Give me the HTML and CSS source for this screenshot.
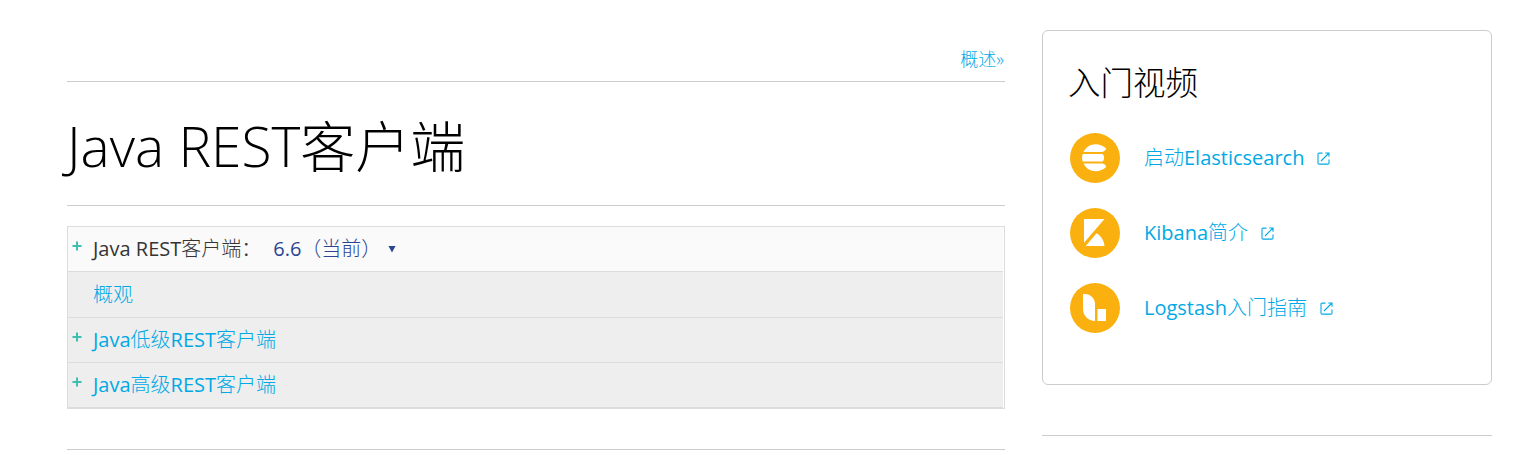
FILE: index.html
```html
<!DOCTYPE html>
<html lang="zh-CN">
<head>
<meta charset="utf-8">
<title>Java REST客户端</title>
<link rel="stylesheet" href="styles.css">
</head>
<body>
<div class="page">
  <main class="main">
    <nav class="nav"><a href="#">概述»</a></nav>
    <h1 class="title"><span class="title-text">Java REST客户端</span></h1>
    <div class="toc">
      <div class="row row-head">
        <svg class="plus" viewBox="0 0 10 10"><path d="M5 .5v9M.5 5h9"/></svg>
        <span class="label">Java REST<span class="zh">客户端：</span></span>
        <span class="select"><span class="version">6.6<span class="zh">（当前）</span></span><svg class="caret" viewBox="0 0 8 8"><path d="M.5 1h7L4 7.500z"/></svg></span>
      </div>
      <div class="row"><span class="plus"></span><a class="label" href="#"><span class="zh">概观</span></a></div>
      <div class="row"><svg class="plus" viewBox="0 0 10 10"><path d="M5 .5v9M.5 5h9"/></svg><a class="label" href="#">Java<span class="zh">低级</span>REST<span class="zh">客户端</span></a></div>
      <div class="row"><svg class="plus" viewBox="0 0 10 10"><path d="M5 .5v9M.5 5h9"/></svg><a class="label" href="#">Java<span class="zh">高级</span>REST<span class="zh">客户端</span></a></div>
    </div>
    <hr class="rule">
  </main>
  <aside class="side">
    <section class="card">
      <h2 class="card-title">入门视频</h2>
      <a class="video" href="#">
        <svg class="badge" viewBox="0 0 50 50"><circle cx="25" cy="25" r="25" fill="#fab110"/><path fill="#fff" d="M13.500 19C16 14 20.500 11.300 25.500 11.300c4.300 0 8 1.700 10.800 4.500-1.200 2-2.700 3.200-4.500 3.200zM12.600 21H32c2.800 0 2.800 7.500 0 7.500H12.600a13 13 0 0 1 0-7.500zM13.500 30.500H32c1.800 0 3.300 1.200 4.300 3.200-2.800 2.800-6.500 4.500-10.800 4.500-5 0-9.500-2.700-12-7.700z"/></svg>
        <span class="video-text"><span class="zh">启动</span>Elasticsearch</span>
        <svg class="ext" viewBox="0 0 13 13"><path d="M5.500 1.100H2.100a1.100 1.100 0 0 0-1.100 1.100V11a1.100 1.100 0 0 0 1.100 1.100h8.800A1.100 1.100 0 0 0 12 11V7.500M8.200 1H12v3.800M12 1L4 9"/></svg>
      </a>
      <a class="video" href="#">
        <svg class="badge" viewBox="0 0 50 50"><circle cx="25" cy="25" r="25" fill="#fab110"/><path fill="#fff" d="M14 11h20.500L14 34.800zM26.500 25.300c4.500 2.700 7.600 7.200 8 12.700H15.700z"/></svg>
        <span class="video-text">Kibana<span class="zh">简介</span></span>
        <svg class="ext" viewBox="0 0 13 13"><path d="M5.500 1.100H2.100a1.100 1.100 0 0 0-1.100 1.100V11a1.100 1.100 0 0 0 1.100 1.100h8.800A1.100 1.100 0 0 0 12 11V7.500M8.200 1H12v3.800M12 1L4 9"/></svg>
      </a>
      <a class="video" href="#">
        <svg class="badge" viewBox="0 0 50 50"><circle cx="25" cy="25" r="25" fill="#fab110"/><path fill="#fff" d="M13 11h2c5.500 0 10 4.500 10 10v17c-6.600 0-12-5.400-12-12zM27.500 26H36v12h-8.500z"/></svg>
        <span class="video-text">Logstash<span class="zh">入门指南</span></span>
        <svg class="ext" viewBox="0 0 13 13"><path d="M5.500 1.100H2.100a1.100 1.100 0 0 0-1.100 1.100V11a1.100 1.100 0 0 0 1.100 1.100h8.800A1.100 1.100 0 0 0 12 11V7.500M8.200 1H12v3.800M12 1L4 9"/></svg>
      </a>
    </section>
    <hr class="rule">
  </aside>
</div>
</body>
</html>
```
FILE: styles.css
```css
* { box-sizing: border-box; }
html, body { margin: 0; background: #fff; }
body {
  font-family: "Open Sans", "Noto Sans CJK SC", sans-serif;
  font-size: 20px;
  font-weight: 300;
  color: #343434;
  overflow: hidden;
}
a { color: #00a9e5; text-decoration: none; }
.zh { font-weight: 300; }
.page { display: flex; gap: 37px; height: 455px; padding: 30px 23px 0 67px; }
.main { width: 938px; }
.side { width: 450px; }
.rule { margin: 0; border: 0; border-top: 1px solid #ccc; }

.nav {
  height: 52px;
  padding: 15px 1px 0 0;
  border-bottom: 1px solid #ccc;
  font-size: 18px;
  line-height: 29px;
  text-align: right;
}
.title {
  margin: 0;
  height: 124px;
  padding-top: 24px;
  border-bottom: 1px solid #ccc;
  font-size: 55px;
  font-weight: 300;
  line-height: 80px;
  color: #000;
}
.title-text { white-space: nowrap; }

.toc { margin: 20px 0 40px; height: 183px; padding-right: 1px; border: 1px solid #dcdcdc; }
.row {
  display: flex;
  align-items: center;
  height: 45px;
  padding-left: 4px;
  background: #eee;
  border-bottom: 1px solid #dcdcdc;
  font-weight: 400;
  line-height: 30px;
}
.row:nth-child(2) { height: 46px; }
.row-head { background: #fafafa; }
.plus { width: 10px; height: 10px; margin: -6px 11px 0 0; stroke: #3ebeb0; stroke-width: 2; fill: none; }
.label { white-space: nowrap; }
.select { display: flex; align-items: center; color: #2b4590; white-space: nowrap; }
.version { margin-left: 12px; }
.caret { width: 8px; height: 8px; margin-left: 7px; fill: #2b4590; }

.card { height: 355px; margin-bottom: 50px; padding: 29px 27px 0; border: 1px solid #ccc; border-radius: 6px; }
.card-title { margin: 0 0 28px -2px; font-size: 32.5px; font-weight: 300; line-height: 45px; color: #000; }
.video { display: flex; align-items: center; height: 50px; margin-bottom: 25px; font-weight: 400; }
.badge { width: 50px; height: 50px; margin-right: 24px; }
.video-text { margin-top: -3px; white-space: nowrap; }
.ext { width: 13px; height: 13px; margin: 1px 0 0 13px; fill: none; stroke: #00a9e5; stroke-width: 1.1; }
```
